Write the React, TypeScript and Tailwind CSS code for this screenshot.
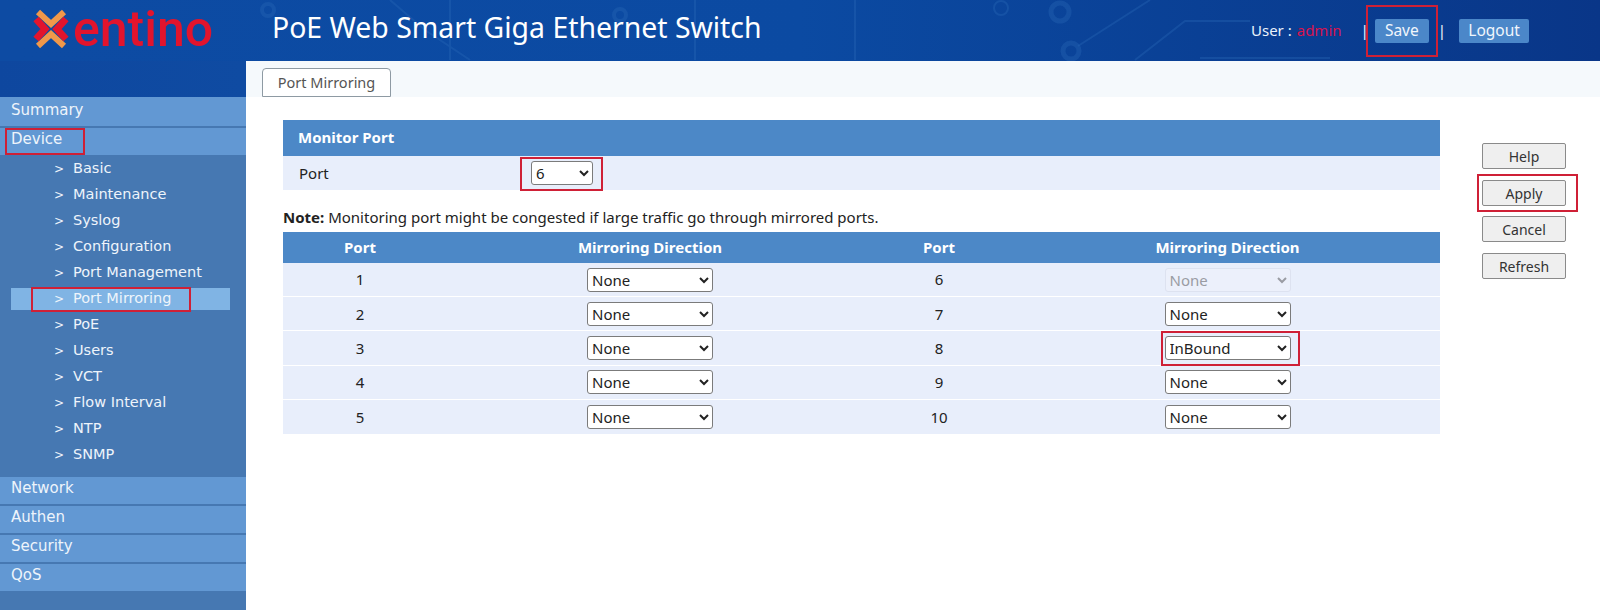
import React from "react";

const subItems = ["Basic", "Maintenance", "Syslog", "Configuration", "Port Management", "Port Mirroring", "PoE", "Users", "VCT", "Flow Interval", "NTP", "SNMP"];

const rows = [
  { left: "1", right: "6", value: "None", disabled: true },
  { left: "2", right: "7", value: "None" },
  { left: "3", right: "8", value: "InBound" },
  { left: "4", right: "9", value: "None" },
  { left: "5", right: "10", value: "None" },
];

// red boxes drawn on top of the screenshot
const marks = [
  "left-[5px] top-[128px] w-[80px] h-[27px]",
  "left-[31px] top-[287px] w-[160px] h-[25px]",
  "left-[520px] top-[157px] w-[83px] h-[34px]",
  "left-[1161px] top-[331px] w-[139px] h-[35px]",
  "left-[1366px] top-[5px] w-[72px] h-[52px]",
  "left-[1477px] top-[174px] w-[101px] h-[38px]",
];

function MainItem({ label, tall }: { label: string; tall?: boolean }) {
  return (
    <div className={`${tall ? "h-[29px] leading-[26px]" : "h-[27px] leading-[23px]"} mb-[2px] pl-[11px] bg-[#6298d3] text-[#eef4fb] text-[15px]`}>
      {label}
    </div>
  );
}

function DirSelect({ value, disabled, width = "w-[126px]" }: { value: string; disabled?: boolean; width?: string }) {
  return (
    <select
      disabled={disabled}
      defaultValue={value}
      className={`${width} h-[24px] pl-0 rounded-[3px] border text-[15px] ${
        disabled ? "bg-[#ecf0fb] border-[#dde2f0] text-[#9a9ca3] opacity-100" : "bg-white border-[#7b7b7b] text-[#222]"
      }`}
    >
      <option>{value}</option>
    </select>
  );
}

function SideButton({ label, className }: { label: string; className: string }) {
  return (
    <button className={`w-[84px] h-[26px] bg-[#efefef] border border-[#8a8a8a] rounded-[2px] text-[#333] text-[14px] ${className}`}>
      {label}
    </button>
  );
}

export default function App() {
  return (
    <div className="relative w-[1600px] h-[610px] overflow-hidden bg-white font-['Noto_Sans',sans-serif]">
      <header className="relative h-[61px] flex items-center bg-gradient-to-r from-[#0d4ba3] via-[#0b4aa2] to-[#093688]">
        <svg className="absolute inset-0" width="1600" height="61" fill="none" stroke="#2a69b8" strokeOpacity="0.35" strokeWidth="2">
          <circle cx="268" cy="10" r="6" strokeWidth="4" />
          <circle cx="620" cy="15" r="6" strokeWidth="4" />
          <path d="M390 0 L425 30 L470 60 M450 0 V60 M695 0 V60 M855 0 V60" />
          <circle cx="1001" cy="8" r="7" />
          <circle cx="1060" cy="12" r="9" strokeWidth="5" />
          <circle cx="1071" cy="51" r="8" strokeWidth="5" />
          <path d="M1078 46 L1150 0 M1135 60 L1185 21 H1250 M1200 58 H1330" />
        </svg>
        <div className="relative w-[272px] pl-[32px] flex items-center shrink-0">
          <svg width="38" height="40" viewBox="0 0 38 40" fill="none" className="shrink-0 mb-[4px]">
            <path d="M6 3 L19 15 L32 3" stroke="#f0984a" strokeWidth="6" />
            <path d="M6 37 L19 25 L32 37" stroke="#f0984a" strokeWidth="6" />
            <path d="M4 10 L13 20 L4 30" stroke="#e2142d" strokeWidth="7" />
            <path d="M34 10 L25 20 L34 30" stroke="#e2142d" strokeWidth="7" />
          </svg>
          <span className="ml-[3px] mb-[2px] text-[#e2142d] text-[50px] leading-[59px] font-medium font-['Roboto',sans-serif]">
            entino
          </span>
        </div>
        <h1 className="relative text-white text-[28.4px] font-normal leading-none mb-[6px]">PoE Web Smart Giga Ethernet Switch</h1>
        <div className="relative ml-auto w-[349px] flex items-center text-[#eaf2fb] text-[15px]">
          <span>User :</span>
          <span className="ml-[5px] text-[#d9134f]">admin</span>
          <span className="ml-[19px]">|</span>
          <button className="ml-[6px] w-[54px] h-[24px] bg-[#4b87c9] rounded-[2px] text-[#f1f6fc] text-[15.5px]">Save</button>
          <span className="ml-[9px]">|</span>
          <button className="ml-[13px] w-[70px] h-[24px] bg-[#4b87c9] rounded-[2px] text-[#f1f6fc] text-[15.5px]">Logout</button>
        </div>
      </header>

      <div className="flex h-[549px]">
        <aside className="w-[246px] shrink-0 bg-[#4678b2] font-['DejaVu_Sans',sans-serif]">
          <div className="h-[36px] bg-gradient-to-r from-[#0e479f] to-[#0f4ba2]" />
          <MainItem label="Summary" tall />
          <MainItem label="Device" />
          <ul className="pt-[1px] pb-[11px] -mt-[4px]">
            {subItems.map((item) => (
              <li
                key={item}
                className={`h-[22px] mt-[4px] ml-[11px] w-[219px] flex items-center text-[14.5px] text-[#eef4fb] ${
                  item === "Port Mirroring" ? "bg-[#80b4e4]" : ""
                }`}
              >
                <span className="ml-[43px] w-[19px] text-[12px]">&gt;</span>
                {item}
              </li>
            ))}
          </ul>
          <MainItem label="Network" />
          <MainItem label="Authen" />
          <MainItem label="Security" />
          <MainItem label="QoS" />
        </aside>

        <main className="flex-1 min-w-0">
          <div className="h-[36px] bg-[#f5f9fc] pl-[16px] pt-[7px]">
            <div className="w-[129px] h-[29px] bg-white border border-[#8e9aa3] rounded-t-[4px] text-center text-[#555] text-[14.5px] leading-[26px]">
              Port Mirroring
            </div>
          </div>
          <div className="flex pl-[37px] pt-[23px]">
            <div className="w-[1157px] shrink-0">
              <div className="h-[36px] pl-[15px] bg-[#4c88c7] text-white text-[15px] font-bold leading-[34px]">Monitor Port</div>
              <div className="h-[34px] flex items-center pl-[16px] bg-[#e8eefb] text-[#222] text-[15px]">
                <span className="w-[232px]">Port</span>
                <DirSelect value="6" width="w-[62px]" />
              </div>
              <p className="h-[42px] pt-[17px] text-[15px] leading-[21px] text-[#222]">
                <b>Note:</b> Monitoring port might be congested if large traffic go through mirrored ports.
              </p>
              <div className="grid grid-cols-[154px_426px_152px_425px] h-[31px] items-center text-center bg-[#4c88c7] text-white text-[15px] font-bold">
                <span>Port</span>
                <span>Mirroring Direction</span>
                <span>Port</span>
                <span>Mirroring Direction</span>
              </div>
              {rows.map((row) => (
                <div
                  key={row.left}
                  className="grid grid-cols-[154px_426px_152px_425px] h-[34.2px] items-center text-center bg-[#e8eefb] border-b border-white last:border-b-0 text-[#222] text-[15px]"
                >
                  <span>{row.left}</span>
                  <span>
                    <DirSelect value="None" />
                  </span>
                  <span>{row.right}</span>
                  <span>
                    <DirSelect value={row.value} disabled={row.disabled} />
                  </span>
                </div>
              ))}
            </div>
            <div className="ml-[42px] pt-[23px] flex flex-col">
              <SideButton label="Help" className="" />
              <SideButton label="Apply" className="mt-[11px]" />
              <SideButton label="Cancel" className="mt-[10px]" />
              <SideButton label="Refresh" className="mt-[11px]" />
            </div>
          </div>
        </main>
      </div>

      {marks.map((mark) => (
        <div key={mark} className={`absolute border-2 border-[#cf2036] ${mark}`} />
      ))}
    </div>
  );
}
